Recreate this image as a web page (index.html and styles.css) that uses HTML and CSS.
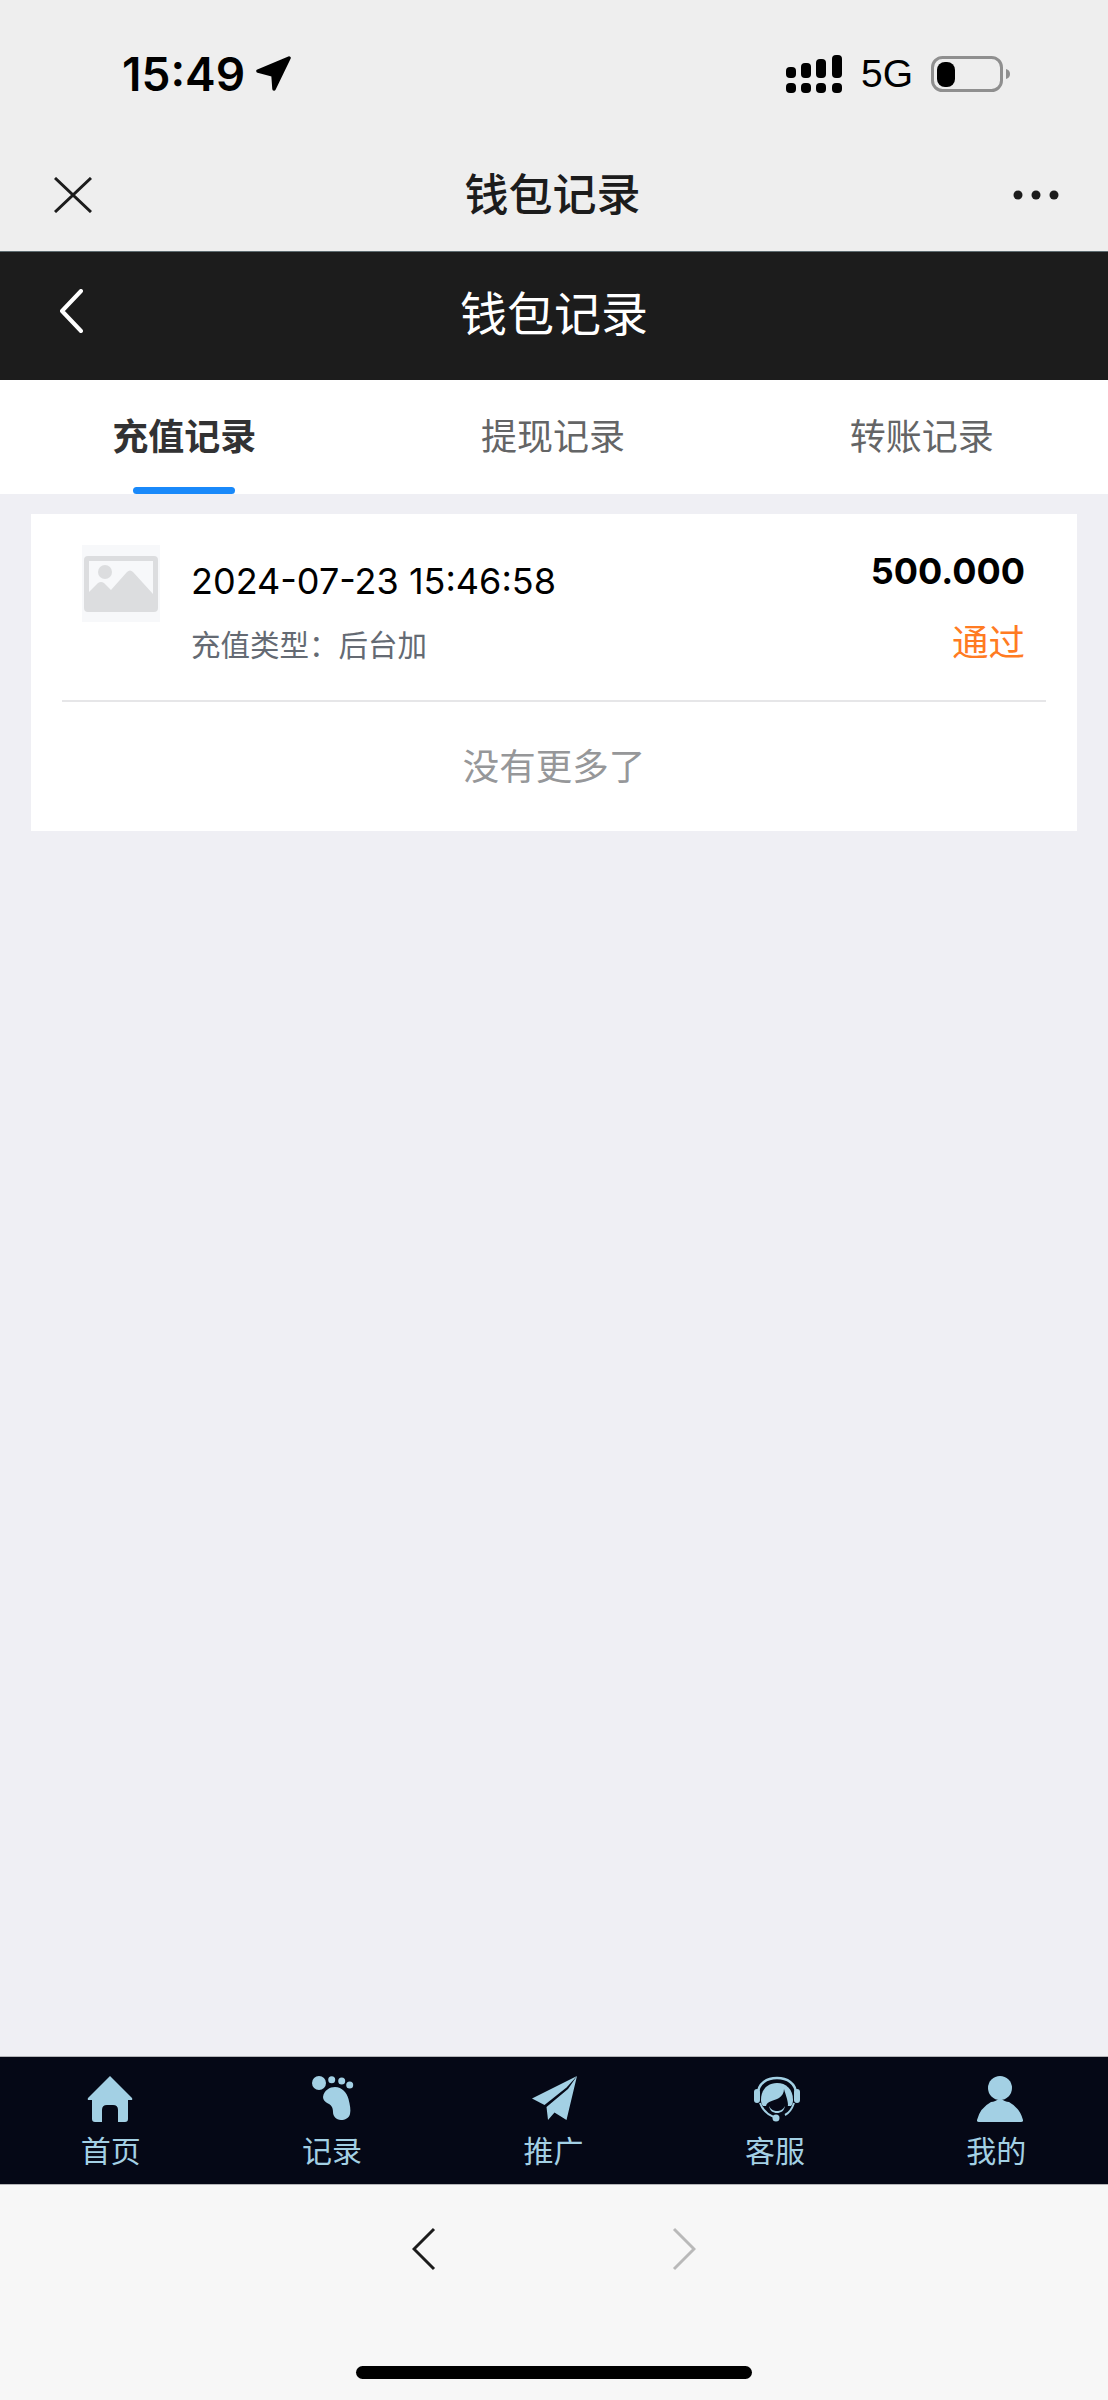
FILE: index.html
```html
<!DOCTYPE html>
<html lang="zh-CN">
<head>
<meta charset="utf-8">
<title>钱包记录</title>
<link rel="stylesheet" href="styles.css">
</head>
<body>
<div class="phone">
  <header class="chrome">
    <div class="status">
      <div class="status-left">
        <span class="clock">15:49</span>
        <svg class="loc" viewBox="0 0 36 36"><path d="M34 2 3 15 18 19 19 33z" stroke="#000" stroke-width="3.500" stroke-linejoin="round"/></svg>
      </div>
      <div class="status-right">
        <svg class="signal" viewBox="0 0 56 38">
          <rect x="0" y="12" width="10" height="11" rx="4"/><rect x="15" y="8" width="10" height="15" rx="4"/><rect x="30" y="4" width="10" height="19" rx="4"/><rect x="46" y="0" width="10" height="23" rx="4"/>
          <rect x="0" y="28" width="10" height="10" rx="4"/><rect x="15" y="28" width="10" height="10" rx="4"/><rect x="30" y="28" width="10" height="10" rx="4"/><rect x="46" y="28" width="10" height="10" rx="4"/>
        </svg>
        <span class="net">5G</span>
        <svg class="battery" viewBox="0 0 80 36">
          <rect x="1.500" y="1.500" width="69" height="33" rx="10" fill="none" stroke="#8f8f8f" stroke-width="3"/>
          <rect x="6" y="6" width="18" height="25" rx="8" fill="#000"/>
          <path d="M75 13q4 1 4 5t-4 5z" fill="#8f8f8f"/>
        </svg>
      </div>
    </div>
    <div class="wxbar">
      <svg class="close" viewBox="0 0 38 36"><path d="M1 1 37 35M37 1 1 35" fill="none" stroke="#1c1c1c" stroke-width="3"/></svg>
      <h1 class="wxtitle">钱包记录</h1>
      <svg class="more" viewBox="0 0 46 10"><circle cx="5" cy="5" r="4.500"/><circle cx="23" cy="5" r="4.500"/><circle cx="41" cy="5" r="4.500"/></svg>
    </div>
  </header>

  <div class="appbar">
    <svg class="back" viewBox="0 0 24 44"><path d="M22 2 3 22l19 20" fill="none" stroke="#fff" stroke-width="4" stroke-linecap="round" stroke-linejoin="round"/></svg>
    <h2 class="apptitle">钱包记录</h2>
  </div>

  <nav class="tabs">
    <div class="tab tab-active">充值记录<span class="tab-line"></span></div>
    <div class="tab">提现记录</div>
    <div class="tab">转账记录</div>
  </nav>

  <main class="content">
    <section class="card">
      <div class="record">
        <div class="thumb">
          <svg class="thumb-icon" viewBox="0 0 74 56">
            <path fill="#dcdddf" fill-rule="evenodd" d="M4 0h66q4 0 4 4v48q0 4-4 4H4q-4 0-4-4V4q0-4 4-4zM5 5v31l9-9q3-2 6 0l7 7 16-18q3-3 6 0l20 22V5z"/>
            <circle cx="21" cy="16" r="7" fill="#dcdddf"/>
          </svg>
        </div>
        <div class="info">
          <div class="date">2024-07-23 15:46:58</div>
          <div class="type">充值类型&#xFF1A;后台加</div>
        </div>
        <div class="side">
          <div class="amount">500.000</div>
          <div class="state">通过</div>
        </div>
      </div>
      <div class="nomore">没有更多了</div>
    </section>
  </main>

  <footer class="tabbar">
    <div class="tb-item">
      <svg class="tb-icon tb-home" viewBox="0 0 46 46"><path d="M23 0 45 22q1 2-1 2h-3v19q0 3-3 3h-7V34q0-5-5-5h-6q-5 0-5 5v12H8q-3 0-3-3V24H2q-2 0-1-2z"/></svg>
      <span>首页</span>
    </div>
    <div class="tb-item">
      <svg class="tb-icon tb-foot" viewBox="0 0 46 46"><circle cx="9" cy="7" r="7"/><circle cx="21.700" cy="3.700" r="3.500"/><circle cx="31.700" cy="5" r="3.500"/><circle cx="39.700" cy="9" r="3.500"/><path d="M13 21C14 14 20 11 25 11 32 11 37 17 38.500 23 40 29 41 34 40 38 39 42 35 44 31 44 26 44 23 40 23 36 23 31 21 29 18 27.500 15 26 13 24 13 21z"/></svg>
      <span>记录</span>
    </div>
    <div class="tb-item">
      <svg class="tb-icon tb-plane" viewBox="0 0 46 46"><path d="M45.500 0 .5 22.500 13 29 35 11.500z"/><path d="M45.500 0 36.500 13 15 31 16.500 44 23 36.500 35 44z"/></svg>
      <span>推广</span>
    </div>
    <div class="tb-item">
      <svg class="tb-icon tb-head" viewBox="0 0 46 46">
        <path d="M4 18C4 7 13 2 23 2S42 7 42 18" fill="none" stroke="#a3d0e4" stroke-width="2.500"/>
        <rect x="0" y="13" width="6" height="14" rx="3"/><rect x="40" y="13" width="6" height="14" rx="3"/>
        <path d="M7 24C7 13 14 7 23 7S39 13 39 24C39 27 38 29 37 30L9 30C8 29 7 27 7 24z"/>
        <path fill="#050816" d="M12 30C13 25 20 25 25 22 28 20 30 17 30 13 31 17 34 24 34 29 33 35 28 39 23 39 17 39 12 35 12 30z"/>
        <path d="M15 30C17 34 20 35 23 35S29 34 31 30C30 35 27 37 23 37S16 35 15 30z"/>
        <path d="M6 27C9 35 15 40 23 42M40 27C38 33 35 37 31 39" fill="none" stroke="#a3d0e4" stroke-width="2"/>
        <circle cx="22" cy="42" r="3.500"/>
      </svg>
      <span>客服</span>
    </div>
    <div class="tb-item">
      <svg class="tb-icon tb-user" viewBox="0 0 46 46"><circle cx="23" cy="12" r="12"/><path d="M23 22q-5 4-9 4-11 6-14 18-.5 2 2 2h42q2.500 0 2-2-3-12-14-18-4 0-9-4z"/></svg>
      <span>我的</span>
    </div>
  </footer>

  <div class="browser">
    <div class="browser-nav">
      <svg class="arrow" viewBox="0 0 24 44"><path d="M22 2 2 22l20 20" fill="none" stroke="#1c1c1c" stroke-width="3"/></svg>
      <svg class="arrow" viewBox="0 0 24 44"><path d="M2 2l20 20L2 42" fill="none" stroke="#b9b9b9" stroke-width="3"/></svg>
    </div>
    <div class="home-pill"></div>
  </div>
</div>
</body>
</html>
```

FILE: styles.css
```css
* { box-sizing: border-box; }
html, body { margin: 0; padding: 0; }
body { width: 1108px; height: 2400px; overflow: hidden; font-family: Inter, "Noto Sans CJK SC", sans-serif; }
h1, h2 { margin: 0; font-size: inherit; }
.phone { width: 1108px; height: 2400px; display: flex; flex-direction: column; background: #efeff4; }

.chrome { height: 251px; background: #eeeeee; flex: none; }
.status { height: 138px; padding: 55px 97px 0 122px; display: flex; justify-content: space-between; align-items: flex-start; }
.status-left { display: flex; align-items: center; gap: 10px; height: 38px; }
.clock { font-size: 46px; font-weight: 600; line-height: 38px; color: #000; }
.loc { width: 36px; height: 36px; fill: #000; }
.status-right { display: flex; align-items: center; height: 38px; }
.signal { width: 56px; height: 38px; fill: #000; }
.net { margin-left: 19px; font-family: "Liberation Sans", sans-serif; font-size: 39px; line-height: 38px; color: #000; }
.battery { width: 80px; height: 36px; margin-left: 18px; }

.wxbar { height: 113px; padding: 0 49px 0 54px; display: flex; align-items: center; justify-content: space-between; }
.close { width: 38px; height: 36px; }
.wxtitle { font-size: 44px; font-weight: 500; line-height: 48px; color: #1c1c1c; }
.more { width: 46px; height: 10px; fill: #1c1c1c; }

.appbar { height: 129px; flex: none; background: #1c1c1c; border-top: 1px solid #5d6b70; position: relative; display: flex; align-items: center; justify-content: center; padding-bottom: 4px; }
.back { position: absolute; left: 59px; top: 37px; width: 24px; height: 44px; }
.apptitle { font-size: 47px; font-weight: 400; line-height: 52px; color: #fff; }

.tabs { height: 114px; flex: none; background: #fff; padding-right: 2px; display: grid; grid-template-columns: repeat(3, 1fr); }
.tab { position: relative; display: flex; justify-content: center; align-items: center; font-size: 36px; line-height: 44px; color: #646566; }
.tab-active { font-weight: 700; color: #323233; }
.tab-line { position: absolute; left: 133px; bottom: 0; width: 102px; height: 7px; border-radius: 4px; background: #1989fa; }

.content { flex: 1; padding: 20px 31px 0; }
.card { height: 317px; background: #fff; display: flex; flex-direction: column; }
.record { height: 188px; margin: 0 31px; padding: 31px 21px 0 20px; border-bottom: 2px solid #e6e6e8; display: flex; }
.thumb { width: 78px; height: 77px; background: #f7f8fa; display: flex; align-items: center; justify-content: center; flex: none; }
.thumb-icon { width: 74px; height: 56px; }
.info { margin-left: 31px; flex: 1; }
.date { margin-top: 16px; font-size: 36px; line-height: 40px; color: #000; }
.type { margin-top: 24px; font-size: 29.500px; line-height: 40px; color: #646a73; }
.side { text-align: right; }
.amount { margin-top: 6px; font-size: 36px; font-weight: 700; line-height: 40px; color: #000; }
.state { margin-top: 32px; font-size: 36.500px; line-height: 40px; color: #ff7b22; }
.nomore { flex: 1; display: flex; align-items: center; justify-content: center; padding-bottom: 4px; font-size: 36.500px; color: #969799; }

.tabbar { height: 129px; flex: none; background: #050816; border-top: 1px solid #b5b5b8; border-bottom: 1px solid #b5b5b8; padding-right: 1px; display: grid; grid-template-columns: repeat(5, 1fr); color: #a3d0e4; }
.tb-item { display: flex; flex-direction: column; align-items: center; padding-top: 19px; font-size: 30px; line-height: 36px; }
.tb-item span { margin-top: 1px; }
.tb-icon { width: 46px; height: 46px; fill: #a3d0e4; margin-bottom: 10px; }
.tb-home { transform: translateX(-1px); }
.tb-foot { transform: translateX(1px); }
.tb-plane { transform: translateX(1.500px); }
.tb-head { transform: translateX(2px); }
.tb-user { transform: translateX(4px); }

.browser { height: 215px; flex: none; background: #f7f7f7; display: flex; flex-direction: column; align-items: center; }
.browser-nav { margin-top: 42px; width: 284px; display: flex; justify-content: space-between; }
.arrow { width: 24px; height: 44px; }
.home-pill { margin-top: 95px; width: 396px; height: 13px; border-radius: 7px; background: #000; }
```
